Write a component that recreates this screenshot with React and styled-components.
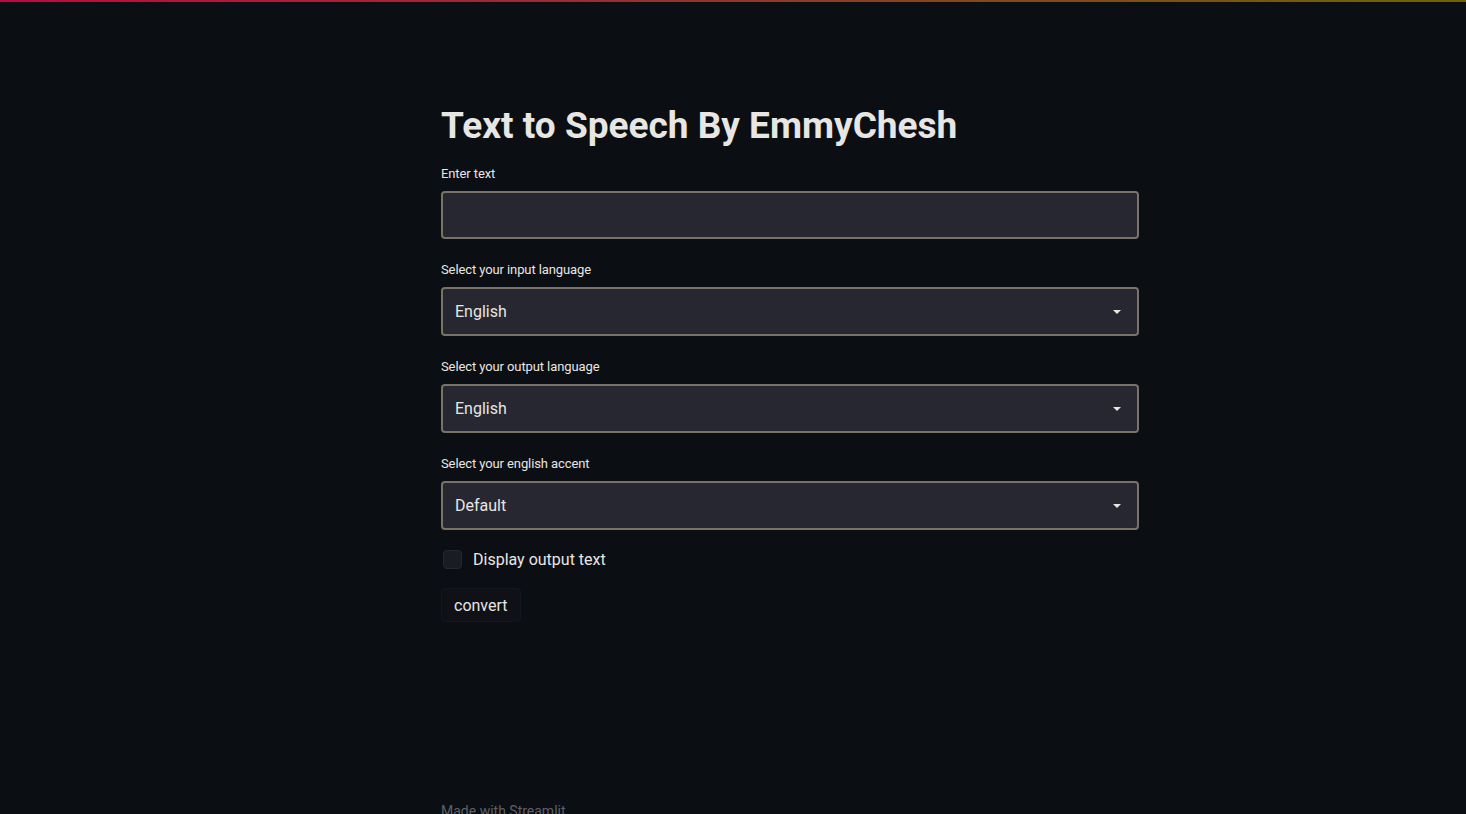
import React from "react";
import styled, { createGlobalStyle } from "styled-components";

const Global = createGlobalStyle`
  html, body { margin: 0; padding: 0; background: #0b0e13; }
  body { font-family: Roboto, "Noto Sans", sans-serif; color: #fafafa; }
`;

const Page = styled.div`
  position: relative;
  height: 814px;
  overflow: hidden;
  background: #0b0e13;
`;

const Decoration = styled.div`
  height: 2px;
  background: linear-gradient(90deg, #b3103f 0%, #8a3a30 50%, #6c6312 100%);
`;

const Main = styled.main`
  width: 698px;
  margin-left: 441px;
  padding-top: 100px;
  display: flex;
  flex-direction: column;
`;

const Title = styled.h1`
  margin: 0 0 16px;
  font-family: Roboto, sans-serif;
  font-weight: 700;
  font-size: 37px;
  line-height: 48px;
  color: #e8e6e3;
`;

const Field = styled.div`
  display: flex;
  flex-direction: column;
  margin-bottom: 23px;
`;

const Label = styled.label`
  font-family: Roboto, sans-serif;
  font-size: 13px;
  line-height: 16px;
  color: #e8e6e3;
  letter-spacing: -0.1px;
  margin-bottom: 9px;
`;

const Box = styled.div`
  box-sizing: border-box;
  height: ${(p) => p.$h || 49}px;
  background: #262730;
  border: 2px solid #7a7169;
  border-radius: 4px;
  display: flex;
  align-items: center;
  padding: 0 13px 0 12px;
  font-family: Roboto, sans-serif;
  font-size: 16px;
  color: #e8e6e3;
`;

const Value = styled.span`
  flex: 1;
`;

const Caret = styled.svg`
  width: 10px;
  height: 6px;
  margin-right: 2px;
`;

const CheckRow = styled.div`
  display: flex;
  align-items: center;
  gap: 11px;
  margin: -3px 0 19px 2px;
  font-family: Roboto, sans-serif;
  font-size: 16px;
  color: #e8e6e3;
`;

const CheckBox = styled.span`
  box-sizing: border-box;
  width: 19px;
  height: 19px;
  border-radius: 4px;
  border: 1px solid #262730;
  background: #1a1c24;
`;

const Button = styled.button`
  align-self: flex-start;
  box-sizing: border-box;
  height: 34px;
  padding: 0 12px;
  background: #0f1117;
  border: 1px solid #141720;
  border-radius: 4px;
  font-family: Roboto, sans-serif;
  font-size: 16px;
  color: #e8e6e3;
`;

const Footer = styled.div`
  position: absolute;
  left: 441px;
  top: 803px;
  font-family: Roboto, sans-serif;
  font-size: 14px;
  color: #5e6068;
`;

function Select({ value }) {
  return (
    <Box>
      <Value>{value}</Value>
      <Caret viewBox="0 0 10 6">
        <path d="M1 1h8L5 5z" fill="#e8e6e3" />
      </Caret>
    </Box>
  );
}

export default function App() {
  return (
    <Page>
      <Global />
      <Decoration />
      <Main>
        <Title>Text to Speech By EmmyChesh</Title>
        <Field>
          <Label>Enter text</Label>
          <Box $h={48} />
        </Field>
        <Field>
          <Label>Select your input language</Label>
          <Select value="English" />
        </Field>
        <Field>
          <Label>Select your output language</Label>
          <Select value="English" />
        </Field>
        <Field>
          <Label>Select your english accent</Label>
          <Select value="Default" />
        </Field>
        <CheckRow>
          <CheckBox />
          <span>Display output text</span>
        </CheckRow>
        <Button>convert</Button>
      </Main>
      <Footer>Made with Streamlit</Footer>
    </Page>
  );
}
